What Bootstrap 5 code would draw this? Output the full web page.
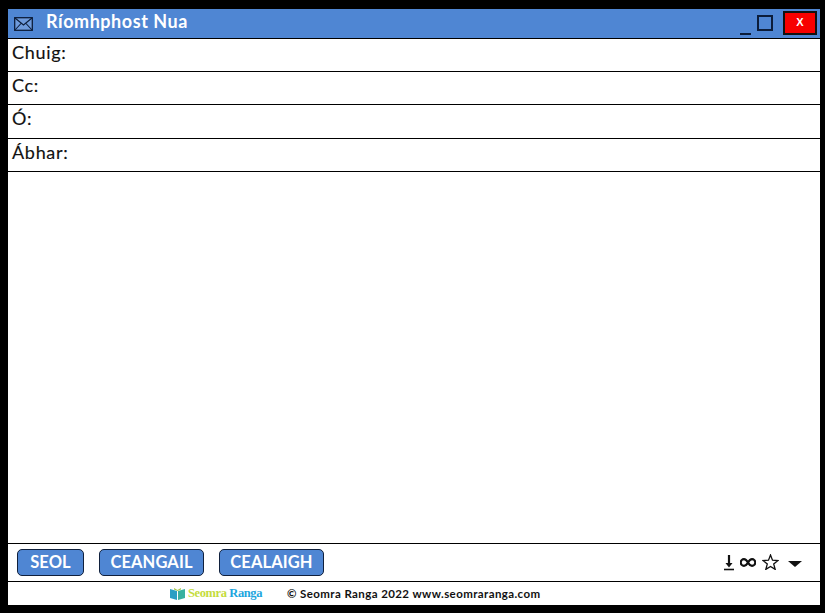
<!DOCTYPE html>
<html lang="ga"><head><meta charset="utf-8"><title>Ríomhphost Nua</title>
<link href="https://cdn.jsdelivr.net/npm/bootstrap@5.3.0/dist/css/bootstrap.min.css" rel="stylesheet">
<style>
html,body{height:100%;margin:0;background:#000;overflow:hidden}
.mailwin{margin:9px 5px 8px 8px;height:596px;background:#fff;font-family:"Lato","Noto Sans",sans-serif;color:#111}
.titlebar{height:30px;background:#4f86d3;border-bottom:1px solid #000;padding:0 3px 0 6px}
.titletext{color:#fff;font-size:18px;font-weight:700;letter-spacing:.55px;margin-left:13px;line-height:25px;align-self:flex-start}
.minbtn{width:11px;height:2px;background:#0c1d3a;margin-top:21px;margin-right:6px}
.maxbtn{width:16px;height:16px;border:2.5px solid #0c1d3a;margin-right:10px;margin-top:-2px}
.closebtn{width:34px;height:24px;background:#f70000;border:2px solid #111;color:#fff;font:700 11px/19px "Liberation Sans",sans-serif;text-align:center;margin-top:-1px}
.fieldrow{height:33px;border-bottom:1px solid #000;font-size:18px;font-weight:400;letter-spacing:.7px;padding:0 4px;line-height:27px;-webkit-text-stroke:.15px #111}
.fieldtall{height:34px}
.bodyarea{height:372px;border-bottom:1px solid #000}
.toolbar{height:38px;border-bottom:1px solid #000;padding:5px 18px 6px 9px}
.mbtn{height:27px;background:#4f86d3;border:1.5px solid #10203c;border-radius:5px;color:#fff;font-size:16.5px;font-weight:700;letter-spacing:.1px;line-height:22px;padding:0;text-align:center}
.w-seol{width:67px;margin-right:15px}
.w-cean{width:105px;margin-right:15px}
.w-ceal{width:105px}
.footerbar{height:23px;font-size:11.5px;font-weight:700;letter-spacing:.4px;padding-left:162px}
.brand{font-family:"Liberation Serif",serif;font-size:12.5px;font-weight:700;letter-spacing:-.4px;margin:0 25px 0 3px}
.brand-a{color:#c5dc3c}
.brand-b{color:#1ea6de}
.glyphs{gap:6px}
.caret-ic{margin-left:3px;margin-top:3px}
</style></head><body>
<div class="mailwin d-flex flex-column">
  <div class="titlebar d-flex align-items-center">
    <svg width="19" height="14" viewBox="0 0 19 14"><rect x=".7" y=".7" width="17.6" height="12.6" fill="#6f9bdc" stroke="#0c1d3a" stroke-width="1.3"/><path d="M1 1l8.500 7L18 1M1 13l6-6.500M18 13l-6-6.500" fill="none" stroke="#0c1d3a" stroke-width="1.100"/></svg>
    <span class="titletext flex-grow-1">Ríomhphost Nua</span>
    <div class="minbtn"></div><div class="maxbtn"></div><div class="closebtn">X</div>
  </div>
  <div class="fieldrow">Chuig:</div>
  <div class="fieldrow">Cc:</div>
  <div class="fieldrow fieldtall">Ó:</div>
  <div class="fieldrow">Ábhar:</div>
  <div class="bodyarea"></div>
  <div class="toolbar d-flex align-items-center">
    <button class="mbtn w-seol">SEOL</button><button class="mbtn w-cean">CEANGAIL</button><button class="mbtn w-ceal">CEALAIGH</button>
    <div class="ms-auto d-flex align-items-center glyphs">
      <svg width="10" height="17" viewBox="0 0 10 17"><path d="M5 1v9" stroke="#111" stroke-width="2.200"/><path d="M1.500 9h7L5 13.500z" fill="#111"/><path d="M0 15.500h10" stroke="#111" stroke-width="1.600"/></svg>
      <svg width="16" height="9" viewBox="0 0 16 9"><path d="M8 4.500C6.500 2 5.500 1.200 4 1.200a3.300 3.300 0 0 0 0 6.600c1.500 0 2.500-.8 4-3.300 1.500-2.500 2.500-3.300 4-3.300a3.300 3.300 0 0 1 0 6.600c-1.500 0-2.500-.8-4-3.300z" fill="none" stroke="#111" stroke-width="2.200"/></svg>
      <svg width="17" height="16" viewBox="0 0 17 16"><path d="M8.500 1l2 5.200 5.500.3-4.300 3.500 1.500 5.400-4.700-3-4.700 3 1.500-5.400L1 6.500l5.500-.3z" fill="none" stroke="#111" stroke-width="1.300"/></svg>
      <svg class="caret-ic" width="14" height="6" viewBox="0 0 14 6"><path d="M0 0h14L7 6z" fill="#111"/></svg>
    </div>
  </div>
  <div class="footerbar d-flex align-items-center">
    <svg width="15" height="13" viewBox="0 0 15 13"><path d="M0 2l7 2v9l-7-2z" fill="#2a9fc4"/><path d="M15 2L8 4v9l7-2z" fill="#38b0a0"/><path d="M4 1l3.500 2L11 1v1.500L7.500 4 4 2.500z" fill="#a5c74a"/></svg>
    <span class="brand"><span class="brand-a">Seomra</span> <span class="brand-b">Ranga</span></span>
    <span>© Seomra Ranga 2022 www.seomraranga.com</span>
  </div>
</div>
<script src="https://cdn.jsdelivr.net/npm/bootstrap@5.3.0/dist/js/bootstrap.bundle.min.js"></script>
</body></html>
